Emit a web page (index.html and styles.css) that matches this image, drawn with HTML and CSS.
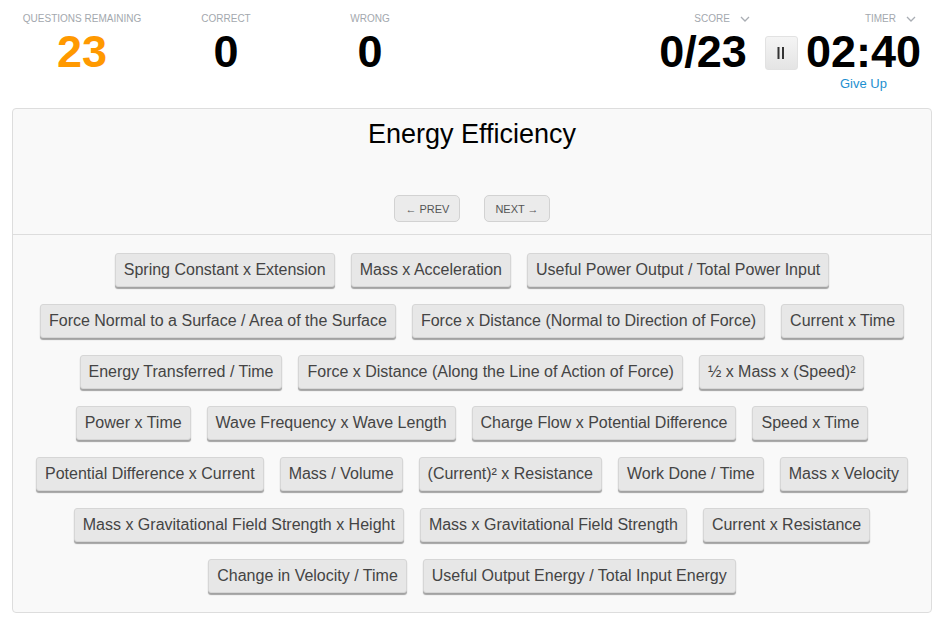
FILE: index.html
```html
<!DOCTYPE html>
<html lang="en">
<head>
    <meta charset="UTF-8">
    <meta name="viewport" content="width=device-width, initial-scale=1.0">
    <title>Energy Efficiency Quiz</title>
    <link rel="stylesheet" href="styles.css">
</head>
<body>
    <div class="top-bar">
        <div class="stat">
            <div class="stat-label">Questions Remaining</div>
            <div class="stat-value orange">23</div>
        </div>
        <div class="stat">
            <div class="stat-label">Correct</div>
            <div class="stat-value">0</div>
        </div>
        <div class="stat">
            <div class="stat-label">Wrong</div>
            <div class="stat-value">0</div>
        </div>

        <div class="right-stats">
            <div class="score">
                <div class="stat-label drop">Score
                    <svg class="chevron" width="10" height="6" viewBox="0 0 10 6"><polyline points="1,1 5,5 9,1" fill="none" stroke="#a9adb3" stroke-width="1.3"/></svg>
                </div>
                <div class="stat-value">0/23</div>
            </div>
            <button class="pause-button" id="pauseButton">
                <svg width="8" height="12" viewBox="0 0 8 12"><rect x="0.5" y="0" width="2" height="12" fill="#333"/><rect x="5" y="0" width="2" height="12" fill="#333"/></svg>
            </button>
            <div class="timer">
                <div class="stat-label drop">Timer
                    <svg class="chevron" width="10" height="6" viewBox="0 0 10 6"><polyline points="1,1 5,5 9,1" fill="none" stroke="#a9adb3" stroke-width="1.3"/></svg>
                </div>
                <div class="timer-body">
                    <div class="stat-value" id="timerValue">02:40</div>
                    <a href="#" class="give-up">Give Up</a>
                </div>
            </div>
        </div>
    </div>

    <div class="quiz-card">
        <div class="quiz-head">
            <h1>Energy Efficiency</h1>
            <div class="nav-buttons">
                <button class="nav-button">&larr; PREV</button>
                <button class="nav-button">NEXT &rarr;</button>
            </div>
        </div>
        <div class="answers" id="answers"></div>
    </div>

    <script>
        const answers = [
            'Spring Constant x Extension',
            'Mass x Acceleration',
            'Useful Power Output / Total Power Input',
            'Force Normal to a Surface / Area of the Surface',
            'Force x Distance (Normal to Direction of Force)',
            'Current x Time',
            'Energy Transferred / Time',
            'Force x Distance (Along the Line of Action of Force)',
            '½ x Mass x (Speed)²',
            'Power x Time',
            'Wave Frequency x Wave Length',
            'Charge Flow x Potential Difference',
            'Speed x Time',
            'Potential Difference x Current',
            'Mass / Volume',
            '(Current)² x Resistance',
            'Work Done / Time',
            'Mass x Velocity',
            'Mass x Gravitational Field Strength x Height',
            'Mass x Gravitational Field Strength',
            'Current x Resistance',
            'Change in Velocity / Time',
            'Useful Output Energy / Total Input Energy'
        ];

        const answersBox = document.getElementById('answers');

        // build the answer buttons
        answers.forEach(text => {
            const btn = document.createElement('button');
            btn.className = 'answer-button';
            btn.textContent = text;
            answersBox.appendChild(btn);
        });
    </script>
</body>
</html>
```

FILE: styles.css
```css
body {
    font-family: "Liberation Sans", Arial, sans-serif;
    background: #ffffff;
    color: #000;
    margin: 0;
}

.top-bar {
    display: flex;
    align-items: flex-start;
    padding: 13px 24px 16px 10px;
}

.stat {
    width: 144px;
    text-align: center;
}

.stat-label {
    font-size: 10px;
    line-height: 12px;
    text-transform: uppercase;
    color: #a3a8ae;
}

.stat-value {
    font-size: 45px;
    font-weight: bold;
    line-height: 46px;
    margin-top: 4px;
}

.orange {
    color: #ff9900;
}

.right-stats {
    margin-left: auto;
    display: flex;
    align-items: flex-start;
}

.score {
    text-align: right;
}

.score .drop {
    margin-right: -3px;
}

.drop {
    display: flex;
    align-items: center;
    justify-content: flex-end;
    gap: 10px;
}

.chevron {
    display: block;
}

.pause-button {
    width: 33px;
    height: 34px;
    margin: 23px 8px 0 18px;
    border: 1px solid #e2e2e2;
    border-radius: 3px;
    background: linear-gradient(#f4f4f4, #e4e4e4);
    display: flex;
    align-items: center;
    justify-content: center;
    padding: 0;
    cursor: pointer;
}

.timer .drop {
    padding-right: 5px;
}

.timer-body {
    text-align: center;
}

.give-up {
    display: block;
    font-size: 13px;
    line-height: 16px;
    margin-top: 1px;
    color: #1e8fd0;
    text-decoration: none;
}

.quiz-card {
    margin: 0 13px 0 12px;
    background: #f9f9f9;
    border: 1px solid #dddddd;
    border-radius: 4px;
}

.quiz-head {
    text-align: center;
    padding: 10px 0 12px;
    border-bottom: 1px solid #dddddd;
}

.quiz-head h1 {
    font-size: 27px;
    font-weight: normal;
    line-height: 30px;
    margin: 0;
}

.nav-buttons {
    display: flex;
    justify-content: center;
    gap: 24px;
    margin-top: 46px;
}

.nav-button {
    font-family: inherit;
    font-size: 11px;
    height: 27px;
    padding: 0 10px;
    color: #555;
    background: #ebebeb;
    border: 1px solid #d2d2d2;
    border-radius: 5px;
    cursor: pointer;
}

.answers {
    display: flex;
    flex-wrap: wrap;
    justify-content: center;
    gap: 17px 16px;
    padding: 18px 20px 19px;
}

.answer-button {
    font-family: inherit;
    font-size: 16px;
    height: 34px;
    padding: 0 8px;
    color: #444;
    background: #e7e7e7;
    border: 1px solid #d6d6d6;
    border-radius: 3px;
    box-shadow: 0 2px 1px rgba(0, 0, 0, 0.35);
    cursor: pointer;
}

.answer-button:hover {
    background: #dcdcdc;
}
```
